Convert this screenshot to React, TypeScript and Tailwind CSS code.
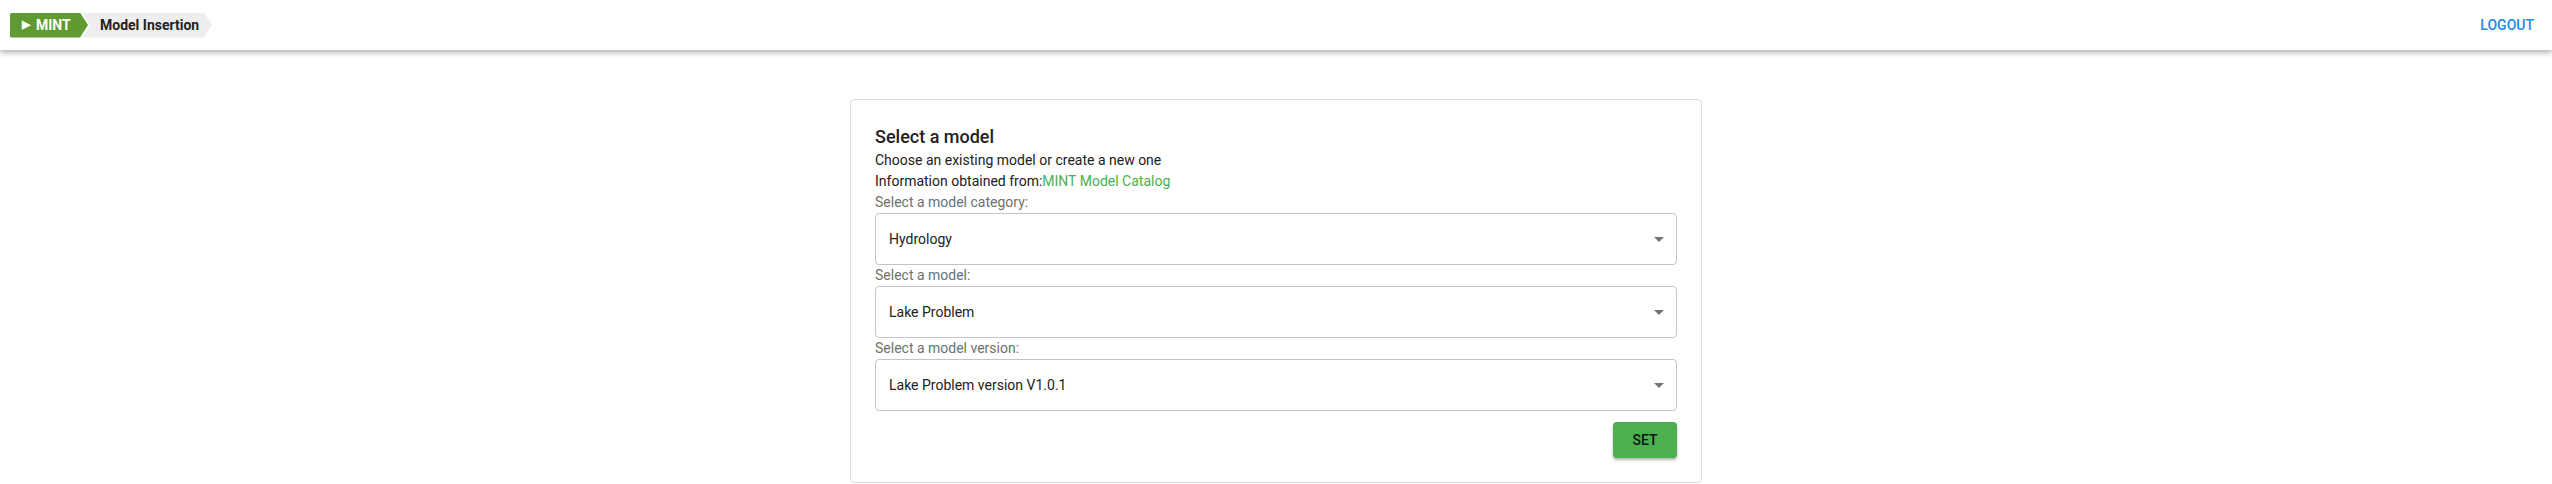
import React from 'react';

function Caret() {
    return (
        <svg width="10" height="5" viewBox="0 0 10 5" className="shrink-0">
            <path d="M0 0 L10 0 L5 5 Z" fill="#757575" />
        </svg>
    );
}

function SelectBox({ label, value }: { label: string; value: string }) {
    return (
        <div>
            <div className="text-[14px] leading-[21px] text-[#707070]">{label}</div>
            <div className="h-[52px] border border-[#c4c4c4] rounded-[4px] flex items-center justify-between pl-[13px] pr-[12px] text-[14px] text-[#212121]">
                <span>{value}</span>
                <Caret />
            </div>
        </div>
    );
}

export default function App() {
    return (
        <div className="min-h-screen bg-white font-['Roboto',sans-serif]">

            {/* Header */}
            <header className="h-[50px] bg-white flex items-center justify-between pl-[10px] pr-[18px] shadow-[0_3px_5px_rgba(0,0,0,0.28)] relative z-10">
                <div className="flex items-center h-[25px]">
                    <div className="h-full w-[78px] bg-[#5f9b30] rounded-l-[2px] flex items-center pl-3 text-white font-bold text-[14px] [clip-path:polygon(0_0,calc(100%-8px)_0,100%_50%,calc(100%-8px)_100%,0_100%)] relative z-10">
                        <span className="text-[11px] mr-[6px]">▶</span>MINT
                    </div>
                    <div className="h-full w-[130px] ml-[-6px] bg-[#eeeeee] flex items-center pl-[18px] text-[#222] font-bold text-[14px] [clip-path:polygon(0_0,calc(100%-8px)_0,100%_50%,calc(100%-8px)_100%,0_100%,8px_50%)]">
                        Model Insertion
                    </div>
                </div>
                <button className="text-[14px] font-medium text-[#1e88e5] uppercase">Logout</button>
            </header>

            {/* Card */}
            <div className="w-[852px] mx-auto mt-[49px] border border-[#dddddd] rounded-[4px] px-6 pt-6 pb-6">
                <h3 className="text-[18px] leading-[26px] font-medium text-[#212121]">Select a model</h3>
                <p className="text-[14px] leading-[21px] text-[#212121]">Choose an existing model or create a new one</p>
                <p className="text-[14px] leading-[21px] text-[#212121]">
                    Information obtained from:<a className="text-[#4caf50]">MINT Model Catalog</a>
                </p>
                <SelectBox label="Select a model category:" value="Hydrology" />
                <SelectBox label="Select a model:" value="Lake Problem" />
                <SelectBox label="Select a model version:" value="Lake Problem version V1.0.1" />
                <div className="flex justify-end mt-[11px]">
                    <button className="h-9 min-w-[64px] px-4 rounded-[4px] bg-[#4caf50] text-[14px] font-medium text-[#111] shadow-[0_2px_3px_rgba(0,0,0,0.3)]">
                        SET
                    </button>
                </div>
            </div>
        </div>
    );
}
